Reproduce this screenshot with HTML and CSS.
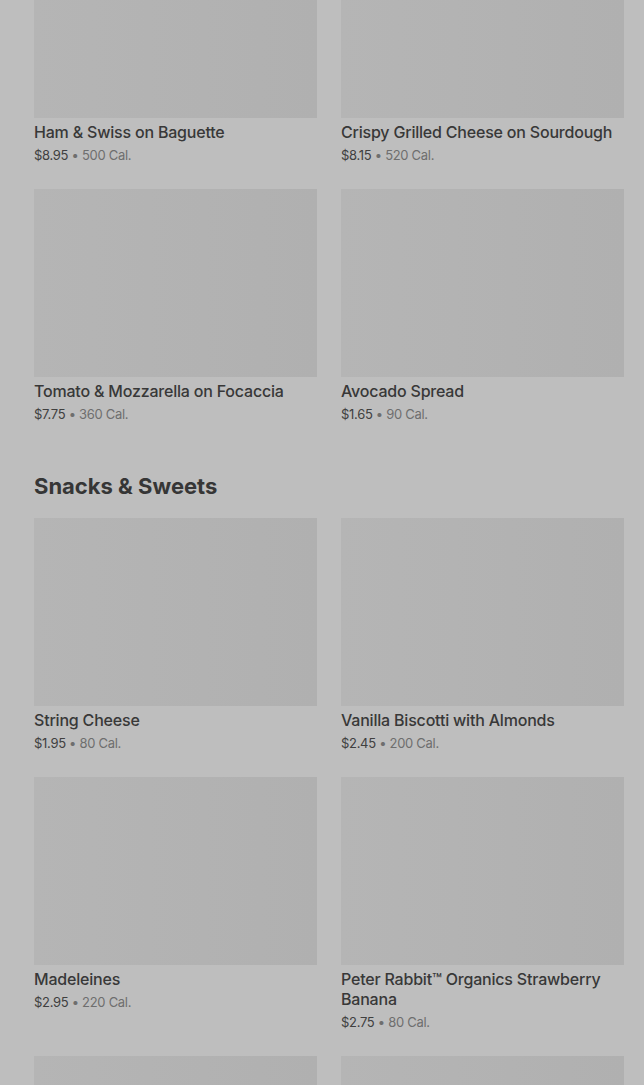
FILE: index.html
```html
<!DOCTYPE html>
<html lang="en">
<head>
    <meta charset="UTF-8">
    <meta name="viewport" content="width=device-width, initial-scale=1.0">
    <title>Menu</title>
    <link rel="stylesheet" href="styles.css">
</head>
<body>
    <div class="menu">
        <section class="category">
            <div class="item-grid">
                <div class="item">
                    <div class="item-image"></div>
                    <div class="item-name">Ham &amp; Swiss on Baguette</div>
                    <div class="item-meta"><span class="price">$8.95</span> • 500 Cal.</div>
                </div>
                <div class="item">
                    <div class="item-image"></div>
                    <div class="item-name">Crispy Grilled Cheese on Sourdough</div>
                    <div class="item-meta"><span class="price">$8.15</span> • 520 Cal.</div>
                </div>
                <div class="item">
                    <div class="item-image"></div>
                    <div class="item-name">Tomato &amp; Mozzarella on Focaccia</div>
                    <div class="item-meta"><span class="price">$7.75</span> • 360 Cal.</div>
                </div>
                <div class="item">
                    <div class="item-image"></div>
                    <div class="item-name">Avocado Spread</div>
                    <div class="item-meta"><span class="price">$1.65</span> • 90 Cal.</div>
                </div>
            </div>
        </section>

        <section class="category">
            <h2>Snacks &amp; Sweets</h2>
            <div class="item-grid">
                <div class="item">
                    <div class="item-image"></div>
                    <div class="item-name">String Cheese</div>
                    <div class="item-meta"><span class="price">$1.95</span> • 80 Cal.</div>
                </div>
                <div class="item">
                    <div class="item-image"></div>
                    <div class="item-name">Vanilla Biscotti with Almonds</div>
                    <div class="item-meta"><span class="price">$2.45</span> • 200 Cal.</div>
                </div>
                <div class="item">
                    <div class="item-image"></div>
                    <div class="item-name">Madeleines</div>
                    <div class="item-meta"><span class="price">$2.95</span> • 220 Cal.</div>
                </div>
                <div class="item">
                    <div class="item-image"></div>
                    <div class="item-name">Peter Rabbit™ Organics Strawberry Banana</div>
                    <div class="item-meta"><span class="price">$2.75</span> • 80 Cal.</div>
                </div>
                <div class="item">
                    <div class="item-image"></div>
                </div>
                <div class="item">
                    <div class="item-image"></div>
                </div>
            </div>
        </section>
    </div>
</body>
</html>
```

FILE: styles.css
```css
body {
    margin: 0;
    background-color: #bebebe;
    font-family: Inter, 'Liberation Sans', sans-serif;
    color: #383838;
    overflow: hidden;
}
.menu {
    /* page is scrolled part way into the list */
    margin-top: -70px;
    padding: 0 20px 0 34px;
}
.category h2 {
    margin: 0;
    padding: 47px 0 18px;
    font-size: 22px;
    line-height: 28px;
    font-weight: 700;
    color: #363636;
}
.item-grid {
    display: grid;
    grid-template-columns: 1fr 1fr;
    column-gap: 24px;
    row-gap: 23px;
}
.item-image {
    height: 188px;
    background: linear-gradient(90deg, #b5b5b5, #b0b0b0);
}
.item-name {
    margin-top: 4px;
    font-size: 16px;
    line-height: 20px;
    font-weight: 500;
    letter-spacing: -0.2px;
}
.item-meta {
    margin-top: 2px;
    font-size: 13px;
    line-height: 22px;
    letter-spacing: -0.3px;
    color: #6e6e6e;
}
.price {
    color: #404040;
}
```
